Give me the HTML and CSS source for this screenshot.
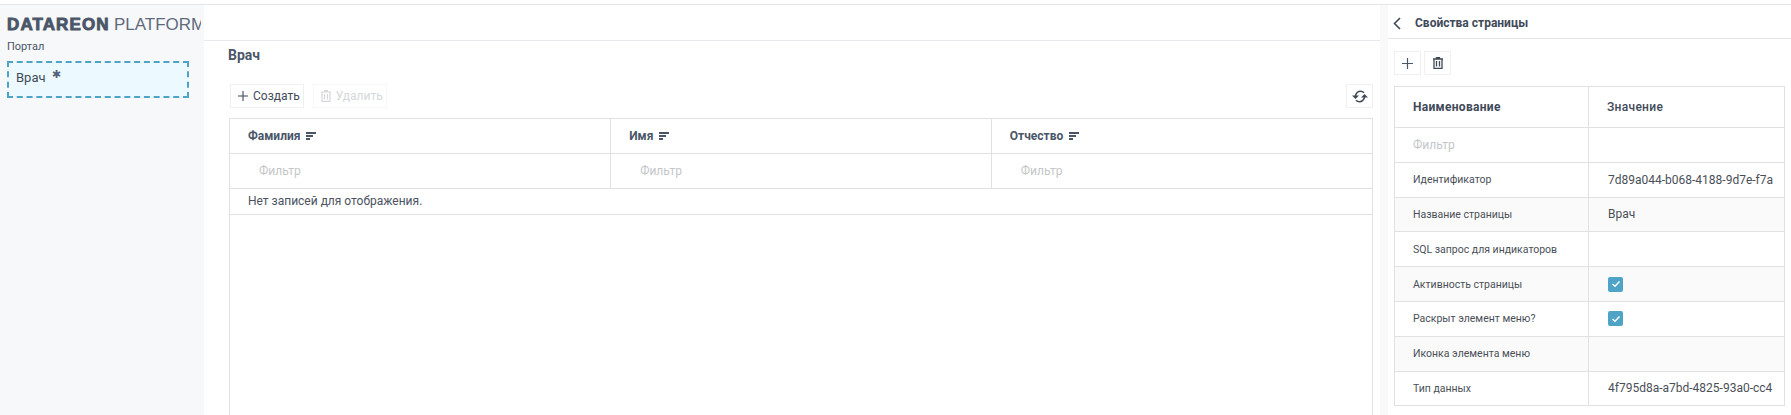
FILE: index.html
```html
<!DOCTYPE html>
<html lang="en">
<head>
  <meta charset="UTF-8">
  <title>Врач - Datareon Platform</title>
  <link rel="stylesheet" href="styles.css">
</head>
<body>

  <div class="page">

    <!-- Sidebar -->
    <aside class="sidebar">
      <div class="logo"><b>DATAREON</b> <span>PLATFORM</span></div>
      <div class="portal">Портал</div>
      <div class="menu-item">Врач <i>✱</i></div>
    </aside>

    <!-- Main -->
    <main class="main">
      <div class="main-top"></div>
      <h2 class="main-title">Врач</h2>

      <div class="toolbar">
        <button class="btn">
          <svg width="10" height="10" viewBox="0 0 10 10"><path d="M5 0v10M0 5h10" stroke="#3f4a59" stroke-width="1.100" fill="none"/></svg>
          Создать
        </button>
        <button class="btn btn-off">
          <svg width="10" height="12" viewBox="0 0 10 12"><path d="M0 2h10M3.500 2V.6h3V2M1 2v9.400h8V2M3.500 4v5.500M6.500 4v5.500" stroke="#d5d7da" stroke-width="1.200" fill="none"/></svg>
          Удалить
        </button>
        <button class="btn btn-icon btn-refresh">
          <svg width="16" height="13" viewBox="0 0 16 13"><path d="M3.500 6C4 3 6.500 1.200 8.500 1.200 10 1.200 11 1.700 12 2.700M12.500 7C12 10 9.500 11.800 7.500 11.800 6 11.800 5 11.300 4 10.300" stroke="#3f4a59" stroke-width="1.600" fill="none"/><path d="M0 5.500h7L3.500 9zM9 7.500h7L12.500 4z" fill="#3f4a59"/></svg>
        </button>
      </div>

      <div class="grid-wrap">
        <table class="grid">
          <tr class="grid-head">
            <th>Фамилия <span class="sort"></span></th>
            <th>Имя <span class="sort"></span></th>
            <th>Отчество <span class="sort"></span></th>
          </tr>
          <tr class="grid-filter">
            <td>Фильтр</td>
            <td>Фильтр</td>
            <td>Фильтр</td>
          </tr>
          <tr class="grid-empty">
            <td colspan="3">Нет записей для отображения.</td>
          </tr>
        </table>
      </div>
    </main>

    <!-- Properties panel -->
    <section class="panel">
      <div class="panel-head">
        <svg width="9" height="13" viewBox="0 0 9 13"><path d="M8 1 2.500 6.500 8 12" stroke="#3f4a59" stroke-width="1.600" fill="none"/></svg>
        <h3>Свойства страницы</h3>
      </div>

      <div class="panel-tools">
        <button class="btn btn-icon">
          <svg width="13" height="13" viewBox="0 0 13 13"><path d="M6.500 1v11M1 6.500h11" stroke="#4a5668" stroke-width="1.200" fill="none"/></svg>
        </button>
        <button class="btn btn-icon">
          <svg width="10" height="12" viewBox="0 0 10 12"><path d="M0 2h10M3.500 2V.6h3V2M1 2v9.400h8V2M3.500 4v5.500M6.500 4v5.500" stroke="#3f4a59" stroke-width="1.300" fill="none"/></svg>
        </button>
      </div>

      <table class="props">
        <tr class="props-head"><th>Наименование</th><th>Значение</th></tr>
        <tr class="props-filter"><td>Фильтр</td><td></td></tr>
        <tr><td>Идентификатор</td><td>7d89a044-b068-4188-9d7e-f7a</td></tr>
        <tr class="odd"><td>Название страницы</td><td>Врач</td></tr>
        <tr><td>SQL запрос для индикаторов</td><td></td></tr>
        <tr class="odd"><td>Активность страницы</td><td><span class="check"><svg width="10" height="8" viewBox="0 0 10 8"><path d="M1.500 4 4 6.200 8.500 1.500" stroke="#fff" stroke-width="1.500" fill="none"/></svg></span></td></tr>
        <tr><td>Раскрыт элемент меню?</td><td><span class="check"><svg width="10" height="8" viewBox="0 0 10 8"><path d="M1.500 4 4 6.200 8.500 1.500" stroke="#fff" stroke-width="1.500" fill="none"/></svg></span></td></tr>
        <tr class="odd"><td>Иконка элемента меню</td><td></td></tr>
        <tr><td>Тип данных</td><td>4f795d8a-a7bd-4825-93a0-cc4</td></tr>
      </table>
    </section>

  </div>

</body>
</html>
```

FILE: styles.css
```css
* {
  margin: 0;
  padding: 0;
  box-sizing: border-box;
}

html, body {
  height: 415px;
  overflow: hidden;
}

body {
  font-family: Roboto, sans-serif;
  font-size: 12px;
  color: #3f4a59;
  background-color: white;
  padding-top: 4px;
}

.page {
  display: flex;
  height: 411px;
  border-top: 1px solid #e3e5e9;
}

/* Sidebar */
.sidebar {
  width: 204px;
  flex: none;
  background-color: #f7f8fa;
  padding: 10px 3px 0 7px;
}

.logo {
  font-family: "Liberation Sans", sans-serif;
  line-height: 20px;
  white-space: nowrap;
  overflow: hidden;
  color: #4a5668;
}

.logo b {
  font-size: 17px;
  font-weight: 700;
  letter-spacing: 1.100px;
  -webkit-text-stroke: 0.9px #4a5668;
}

.logo span {
  font-size: 17px;
  font-weight: 400;
  margin-left: 1px;
  color: #5f6a7a;
}

.portal {
  font-size: 11px;
  line-height: 14px;
  margin-top: 4px;
  color: #4a5668;
}

.menu-item {
  width: 182px;
  height: 37px;
  margin-top: 7px;
  padding: 6px 7px;
  font-size: 13px;
  line-height: 18px;
  background-color: #ecfaff;
  border: 2px dashed #4fa3c7;
}

/* sits raised next to the label */
.menu-item i {
  font-family: "DejaVu Sans", sans-serif;
  font-style: normal;
  font-size: 11px;
  margin-left: 3px;
  color: #55617a;
  position: relative;
  top: -4px;
}

/* Main */
.main {
  flex: 1;
  min-width: 0;
  display: flex;
  flex-direction: column;
  padding-right: 7px;
}

.main-top {
  height: 36px;
  flex: none;
  border-bottom: 1px solid #e8e9ec;
  margin-right: -7px;
}

.main-title {
  font-size: 14px;
  font-weight: 700;
  line-height: 18px;
  margin: 5px 0 0 24px;
  color: #4a5668;
}

.toolbar {
  display: flex;
  gap: 9px;
  margin: 20px 0 10px 26px;
}

.btn {
  display: inline-flex;
  align-items: center;
  justify-content: center;
  gap: 5px;
  height: 24px;
  padding: 0 3px 0 7px;
  font-family: Roboto, sans-serif;
  font-size: 12px;
  color: #3f4a59;
  background-color: white;
  border: 1px solid #eef0f2;
}

.btn-off {
  color: #d5d7da;
  border-color: #f7f7f8;
}

.btn-icon {
  width: 27px;
  padding: 0;
}

.btn-refresh {
  margin-left: auto;
}

.grid-wrap {
  flex: 1;
  margin-left: 25px;
  border-left: 1px solid #dfe1e3;
  border-right: 1px solid #dfe1e3;
}

/* Table */
.grid {
  width: 100%;
  table-layout: fixed;
  border-collapse: collapse;
}

.grid th, .grid td {
  border: 1px solid #dfe1e3;
  text-align: left;
}

.grid tr > :first-child {
  border-left: none;
}

.grid tr > :last-child {
  border-right: none;
}

.grid-head th {
  height: 35px;
  padding-left: 18px;
  font-size: 12px;
  font-weight: 700;
  color: #4a5668;
}

.sort {
  display: inline-block;
  width: 10px;
  height: 8px;
  margin-left: 3px;
  background:
    linear-gradient(#4a5668, #4a5668) 0 0 / 10px 2px no-repeat,
    linear-gradient(#4a5668, #4a5668) 0 3px / 7px 2px no-repeat,
    linear-gradient(#4a5668, #4a5668) 0 6px / 4px 2px no-repeat;
}

.grid-filter td {
  height: 35px;
  padding-left: 29px;
  font-size: 12px;
  color: #c4c6c9;
}

.grid-empty td {
  height: 26px;
  padding: 0 0 2px 18px;
  font-size: 12px;
  color: #4a5260;
}

/* Properties panel */
.panel {
  width: 403px;
  flex: none;
  box-shadow: -8px 0 0 #f9f9fa;
  margin-left: 8px;
}

.panel-head {
  display: flex;
  align-items: center;
  gap: 14px;
  height: 34px;
  padding: 3px 0 0 4px;
  border-bottom: 1px solid #e3e5e9;
}

.panel-head h3 {
  font-size: 12px;
  font-weight: 700;
}

.panel-tools {
  display: flex;
  gap: 3px;
  margin: 12px 0 11px 6px;
}

.props {
  width: 391px;
  margin-left: 6px;
  table-layout: fixed;
  border-collapse: collapse;
}

.props th, .props td {
  border: 1px solid #dfe1e3;
  height: 34.800px;
  text-align: left;
  padding-left: 18px;
  font-size: 10.500px;
  color: #4a4f57;
  white-space: nowrap;
}

.props th:first-child, .props td:first-child {
  width: 194px;
}

.props td:last-child {
  font-size: 12px;
  padding-left: 19px;
}

.props-head th {
  height: 41px;
  font-size: 12px;
  font-weight: 500;
  letter-spacing: 0.300px;
  color: #3f4a59;
}

.props-head th:first-child {
  font-weight: 700;
}

.props-filter td:first-child {
  font-size: 12px;
  color: #c4c6c9;
}

.odd td {
  background-color: #fafafa;
}

.check {
  display: flex;
  align-items: center;
  justify-content: center;
  width: 15px;
  height: 15px;
  background-color: #4fa3c7;
  border-radius: 2px;
}
```
